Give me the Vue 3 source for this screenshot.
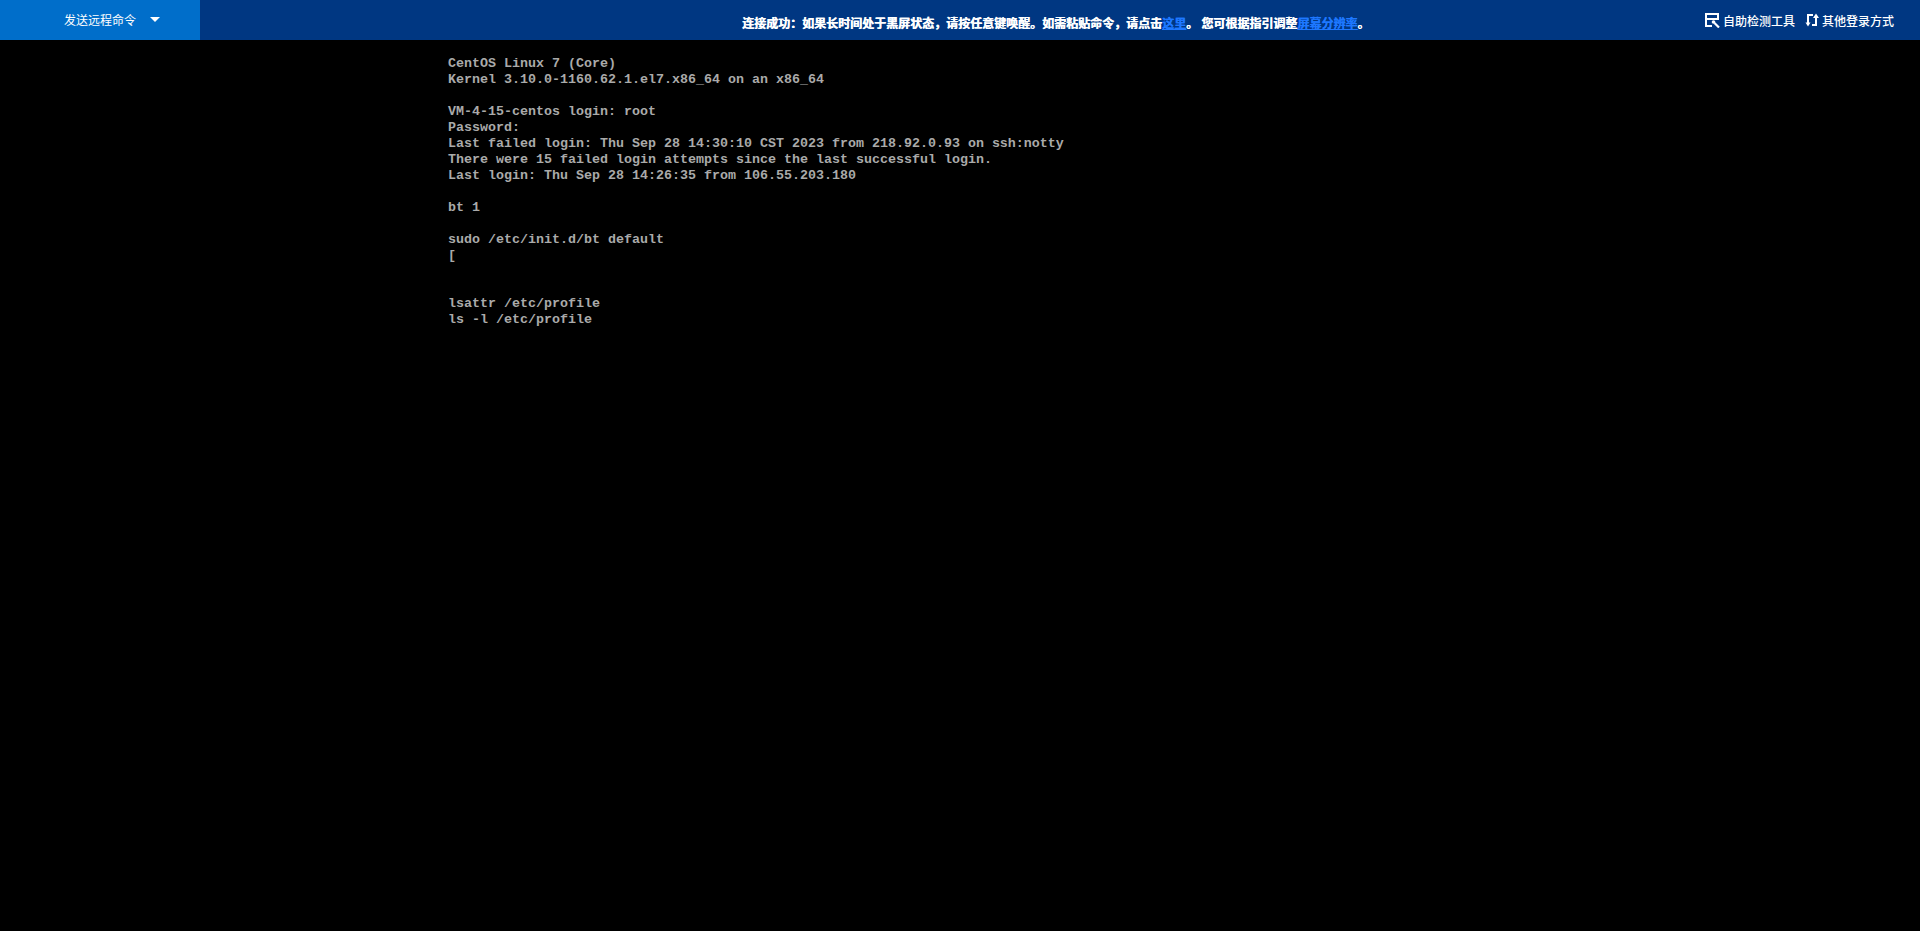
<script setup>
const lines = [
  'CentOS Linux 7 (Core)',
  'Kernel 3.10.0-1160.62.1.el7.x86_64 on an x86_64',
  '',
  'VM-4-15-centos login: root',
  'Password:',
  'Last failed login: Thu Sep 28 14:30:10 CST 2023 from 218.92.0.93 on ssh:notty',
  'There were 15 failed login attempts since the last successful login.',
  'Last login: Thu Sep 28 14:26:35 from 106.55.203.180',
  '',
  'bt 1',
  '',
  'sudo /etc/init.d/bt default',
  '[',
  '',
  '',
  'lsattr /etc/profile',
  'ls -l /etc/profile'
]
</script>

<template>
  <div class="page">
    <header class="bar">
      <div class="send">
        <span class="send-label">发送远程命令</span>
        <span class="caret"></span>
      </div>
      <div class="notice">
        连接成功：如果长时间处于黑屏状态，请按任意键唤醒。如需粘贴命令，请点击<a class="link">这里</a>。 您可根据指引调整<a class="link">屏幕分辨率</a>。
      </div>
      <div class="tools">
        <span class="tool">
          <svg class="ico" width="16" height="16" viewBox="0 0 16 16" fill="none" stroke="#fff" stroke-width="2">
            <path d="M8 14H2V2h12v6M2 7h12" />
            <path d="M10.500 11l4.500 4.500" stroke-width="2.200" />
            <circle cx="9.500" cy="10" r="1.800" fill="#fff" stroke="none" />
          </svg>
          自助检测工具
        </span>
        <span class="tool">
          <svg class="ico" width="14" height="14" viewBox="0 0 14 14" fill="none" stroke="#fff" stroke-width="2">
            <path d="M8 2H3v8" />
            <path d="M0.500 9.500h5L3 13.500z" fill="#fff" stroke="none" />
            <path d="M11 4v8H7" />
            <path d="M8 5l3-4.500L14 5z" fill="#fff" stroke="none" />
          </svg>
          其他登录方式
        </span>
      </div>
    </header>
    <main class="screen">
      <pre class="term"><template v-for="(l, i) in lines" :key="i">{{ l }}
</template></pre>
    </main>
  </div>
</template>

<style>
html, body { margin: 0; background: #000; }
</style>

<style scoped>
.page {
  height: 931px;
  display: flex;
  flex-direction: column;
  background: #000;
  overflow: hidden;
  font-family: "Liberation Sans", "Noto Sans CJK SC", sans-serif;
}
.bar {
  height: 40px;
  flex: none;
  display: flex;
  align-items: center;
  background: #003782;
  color: #fff;
  font-size: 12px;
}
.send {
  width: 200px;
  height: 40px;
  box-sizing: border-box;
  padding-left: 64px;
  padding-bottom: 2px;
  display: flex;
  align-items: center;
  gap: 14px;
  background: #006eca;
}
.caret {
  width: 0;
  height: 0;
  border-left: 5px solid transparent;
  border-right: 5px solid transparent;
  border-top: 5px solid #fff;
}
.notice {
  flex: 1;
  font-weight: 700;
  font-size: 12px;
  padding-top: 4px;
  padding-left: 542px;
  white-space: nowrap;
  text-shadow: 0.4px 0 0 currentColor;
}
.link { color: #1e78ff; text-decoration: underline; }
.tools {
  display: flex;
  gap: 10px;
  padding-right: 26px;
  font-weight: 500;
}
.tool {
  display: flex;
  align-items: center;
  gap: 3px;
}
.screen {
  flex: 1;
  padding: 16px 0 0 448px;
}
.term {
  margin: 0;
  font-family: "Liberation Mono", "DejaVu Sans Mono", monospace;
  font-size: 13.330px;
  line-height: 16px;
  font-weight: 700;
  color: #aaa;
}
</style>
